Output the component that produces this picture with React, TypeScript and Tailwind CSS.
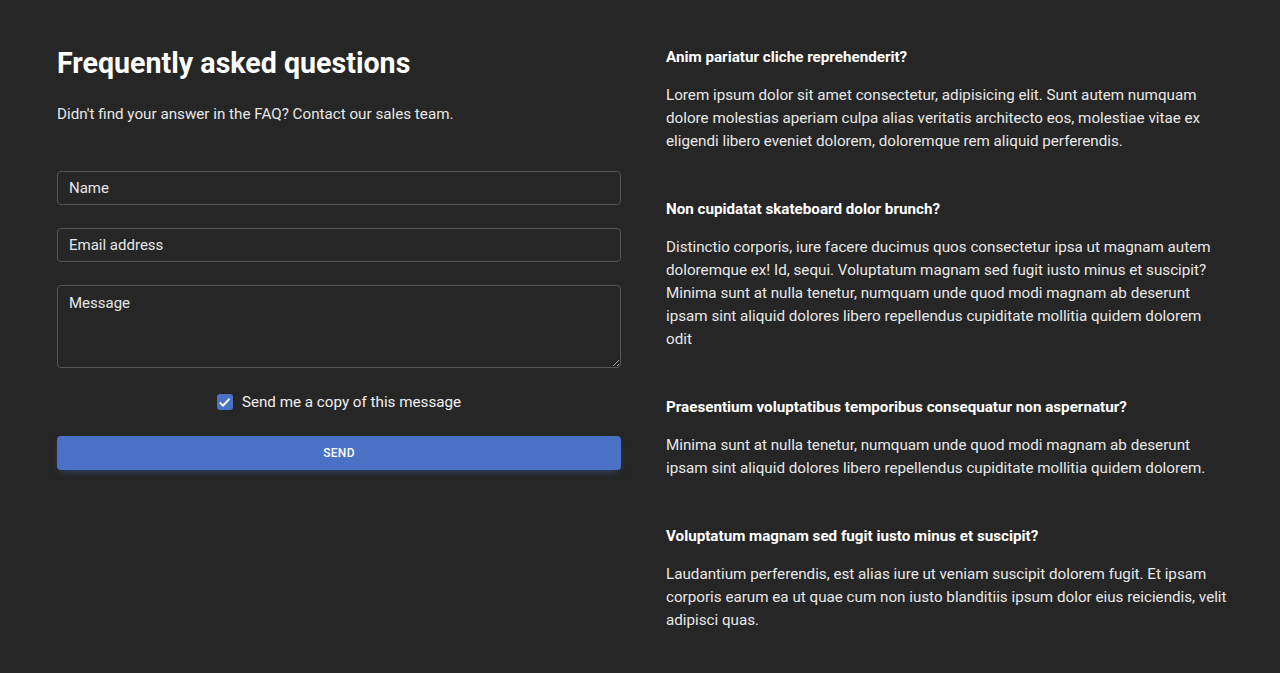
import React, { useState } from 'react';

const faqs = [
  {
    q: 'Anim pariatur cliche reprehenderit?',
    a: 'Lorem ipsum dolor sit amet consectetur, adipisicing elit. Sunt autem numquam dolore molestias aperiam culpa alias veritatis architecto eos, molestiae vitae ex eligendi libero eveniet dolorem, doloremque rem aliquid perferendis.',
  },
  {
    q: 'Non cupidatat skateboard dolor brunch?',
    a: 'Distinctio corporis, iure facere ducimus quos consectetur ipsa ut magnam autem doloremque ex! Id, sequi. Voluptatum magnam sed fugit iusto minus et suscipit? Minima sunt at nulla tenetur, numquam unde quod modi magnam ab deserunt ipsam sint aliquid dolores libero repellendus cupiditate mollitia quidem dolorem odit',
  },
  {
    q: 'Praesentium voluptatibus temporibus consequatur non aspernatur?',
    a: 'Minima sunt at nulla tenetur, numquam unde quod modi magnam ab deserunt ipsam sint aliquid dolores libero repellendus cupiditate mollitia quidem dolorem.',
  },
  {
    q: 'Voluptatum magnam sed fugit iusto minus et suscipit?',
    a: 'Laudantium perferendis, est alias iure ut veniam suscipit dolorem fugit. Et ipsam corporis earum ea ut quae cum non iusto blanditiis ipsum dolor eius reiciendis, velit adipisci quas.',
  },
];

const inputClass =
  'block w-full bg-transparent border border-[#555] rounded-[4px] px-[11px] text-[15px] text-[#f5f5f5] placeholder:text-[#e6e6e6] outline-none focus:border-[#4a71c5]';

const App: React.FC = () => {
  const [copy, setCopy] = useState(true);

  return (
    <div className="min-h-[673px] bg-[#262626] text-[#f5f5f5] font-['Roboto',sans-serif]">
      <div className="flex gap-[45px] pl-[57px] pr-[50px] pt-[42px] pb-[30px]">
        {/* Left column: intro + contact form */}
        <div className="w-[564px] shrink-0">
          <h2 className="text-[28.6px] leading-[42px] font-bold text-white">Frequently asked questions</h2>
          <p className="mt-[19px] text-[15.2px] leading-[22px] text-[#e8e8e8]">
            Didn't find your answer in the FAQ? Contact our sales team.
          </p>

          <form className="mt-[46px]" onSubmit={(e) => e.preventDefault()}>
            <input type="text" placeholder="Name" className={inputClass + ' h-[34px]'} />
            <input type="email" placeholder="Email address" className={inputClass + ' h-[34px] mt-[23px]'} />
            <textarea placeholder="Message" className={inputClass + ' h-[83px] mt-[23px] py-[7px] leading-[20px]'} />

            <label className="mt-[23px] flex items-center justify-center gap-[9px] cursor-pointer select-none">
              <input type="checkbox" checked={copy} onChange={() => setCopy(!copy)} className="sr-only" />
              <span
                className={
                  copy
                    ? 'w-[16px] h-[16px] rounded-[3px] bg-[#4a71c5] flex items-center justify-center'
                    : 'w-[16px] h-[16px] rounded-[3px] border border-[#777]'
                }
              >
                {copy && (
                  <svg width="13" height="13" viewBox="0 0 12 12" fill="none">
                    <path d="M2 6.4l2.6 2.6L10.2 3" stroke="white" strokeWidth="1.7" strokeLinecap="round" strokeLinejoin="round" />
                  </svg>
                )}
              </span>
              <span className="text-[15.2px] leading-[22px] text-[#f0f0f0]">Send me a copy of this message</span>
            </label>

            <button
              type="submit"
              className="mt-[23px] w-full h-[34px] rounded-[4px] bg-[#4a71c5] text-white text-[12px] font-medium tracking-[0.3px] uppercase shadow-[0_4px_9px_-4px_rgba(74,113,197,0.55)]"
            >
              Send
            </button>
          </form>
        </div>

        {/* Right column: questions */}
        <div className="w-[564px] shrink-0 pt-[4px] flex flex-col gap-[45px]">
          {faqs.map((f) => (
            <div key={f.q}>
              <h6 className="text-[15.2px] leading-[22px] font-bold text-white">{f.q}</h6>
              <p className="mt-[16px] text-[15.2px] leading-[23px] text-[#e8e8e8]">{f.a}</p>
            </div>
          ))}
        </div>
      </div>
    </div>
  );
};

export default App;
